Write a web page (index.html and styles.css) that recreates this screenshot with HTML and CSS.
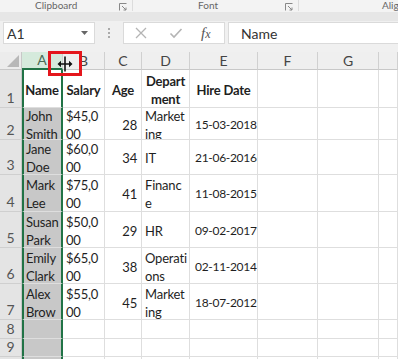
FILE: index.html
```html
<!DOCTYPE html>
<html lang="en">
<head>
    <meta charset="UTF-8">
    <title>Employees</title>
    <link rel="stylesheet" href="styles.css">
</head>
<body>
<!-- ribbon group labels -->
<div class="ribbon">
    <div class="group g1">
        <span class="label">Clipboard</span>
        <svg class="launch" width="8" height="8" viewBox="0 0 8 8"><path d="M0.5 7.5V0.5M0.5 0.5H7.5M3 3L7 7M7 4.5V7H4.5" fill="none" stroke="#888" stroke-width="1"/></svg>
    </div>
    <div class="group g2">
        <span class="label">Font</span>
        <svg class="launch" width="8" height="8" viewBox="0 0 8 8"><path d="M0.5 7.5V0.5M0.5 0.5H7.5M3 3L7 7M7 4.5V7H4.5" fill="none" stroke="#888" stroke-width="1"/></svg>
    </div>
    <div class="group g3">
        <span class="label">Alignment</span>
    </div>
</div>
<div class="band"></div>

<!-- formula bar -->
<div class="bar">
    <div class="namebox">
        <span>A1</span>
        <svg width="7" height="4" viewBox="0 0 7 4"><path d="M0 0H7L3.5 4Z" fill="#666"/></svg>
    </div>
    <div class="grip"><i></i><i></i><i></i></div>
    <div class="btns">
        <svg class="cancel" width="14" height="14" viewBox="0 0 14 14"><path d="M2 2L12 12M12 2L2 12" stroke="#b4b4b4" stroke-width="1.3"/></svg>
        <svg class="enter" width="14" height="14" viewBox="0 0 14 14"><path d="M1.5 7.5L5 11L12.5 3" fill="none" stroke="#b4b4b4" stroke-width="1.6"/></svg>
        <span class="fx">f<small>x</small></span>
    </div>
    <div class="formula">Name</div>
</div>

<!-- sheet -->
<div class="sheet">
    <div class="corner"><svg width="12" height="12" viewBox="0 0 12 12"><path d="M12 0V12H0Z" fill="#b8b8b8"/></svg></div>
    <div class="ch sel">A</div><div class="ch">B</div><div class="ch">C</div><div class="ch">D</div><div class="ch">E</div><div class="ch">F</div><div class="ch">G</div><div class="ch"></div>

    <div class="rh">1</div>
    <div class="c a act hd"><span>Name</span></div>
    <div class="c hd"><span>Salary</span></div>
    <div class="c hd"><span>Age</span></div>
    <div class="c hd"><span>Depart<br>ment</span></div>
    <div class="c hd"><span>Hire Date</span></div>
    <div class="c"></div><div class="c"></div><div class="c"></div>

    <div class="rh">2</div>
    <div class="c a"><span>John<br>Smith</span></div>
    <div class="c"><span>$45,0<br>00</span></div>
    <div class="c num"><span>28</span></div>
    <div class="c"><span>Market<br>ing</span></div>
    <div class="c date"><span>15-03-2018</span></div>
    <div class="c"></div><div class="c"></div><div class="c"></div>

    <div class="rh">3</div>
    <div class="c a"><span>Jane<br>Doe</span></div>
    <div class="c"><span>$60,0<br>00</span></div>
    <div class="c num"><span>34</span></div>
    <div class="c"><span>IT</span></div>
    <div class="c date"><span>21-06-2016</span></div>
    <div class="c"></div><div class="c"></div><div class="c"></div>

    <div class="rh">4</div>
    <div class="c a"><span>Mark<br>Lee</span></div>
    <div class="c"><span>$75,0<br>00</span></div>
    <div class="c num"><span>41</span></div>
    <div class="c"><span>Financ<br>e</span></div>
    <div class="c date"><span>11-08-2015</span></div>
    <div class="c"></div><div class="c"></div><div class="c"></div>

    <div class="rh">5</div>
    <div class="c a"><span>Susan<br>Park</span></div>
    <div class="c"><span>$50,0<br>00</span></div>
    <div class="c num"><span>29</span></div>
    <div class="c"><span>HR</span></div>
    <div class="c date"><span>09-02-2017</span></div>
    <div class="c"></div><div class="c"></div><div class="c"></div>

    <div class="rh">6</div>
    <div class="c a"><span>Emily<br>Clark</span></div>
    <div class="c"><span>$65,0<br>00</span></div>
    <div class="c num"><span>38</span></div>
    <div class="c"><span>Operati<br>ons</span></div>
    <div class="c date"><span>02-11-2014</span></div>
    <div class="c"></div><div class="c"></div><div class="c"></div>

    <div class="rh">7</div>
    <div class="c a"><span>Alex<br>Brow</span></div>
    <div class="c"><span>$55,0<br>00</span></div>
    <div class="c num"><span>45</span></div>
    <div class="c"><span>Market<br>ing</span></div>
    <div class="c date"><span>18-07-2012</span></div>
    <div class="c"></div><div class="c"></div><div class="c"></div>

    <div class="rh">8</div>
    <div class="c a"></div>
    <div class="c"></div><div class="c"></div><div class="c"></div><div class="c"></div><div class="c"></div><div class="c"></div><div class="c"></div>

    <div class="rh">9</div>
    <div class="c a"></div>
    <div class="c"></div><div class="c"></div><div class="c"></div><div class="c"></div><div class="c"></div><div class="c"></div><div class="c"></div>

    <div class="rh"></div>
    <div class="c a"></div>
    <div class="c"></div><div class="c"></div><div class="c"></div><div class="c"></div><div class="c"></div><div class="c"></div><div class="c"></div>

    <!-- highlight round the column divider, with resize cursor -->
    <div class="mark">
        <svg width="16" height="16" viewBox="0 0 16 16"><path d="M7.2 0.5H8.8V15.5H7.2Z M0.5 8L4 4.8V7.3H7.2V8.7H4V11.2Z M15.5 8L12 4.8V7.3H8.8V8.7H12V11.2Z" fill="#111"/></svg>
    </div>
</div>
</body>
</html>
```

FILE: styles.css
```css
*{
    box-sizing: border-box;
}
body{
    margin: 0;
    width: 398px;
    height: 359px;
    overflow: hidden;
    background-color: #f0f0f0;
    font-family: Lato, "Liberation Sans", sans-serif;
}
/* ribbon labels */
.ribbon{
    display: flex;
    height: 12px;
    background-color: #f3f3f3;
    font-size: 10px;
    line-height: 10px;
    color: #666;
}
.group{
    position: relative;
    display: flex;
    align-items: flex-start;
    border-right: 1px solid #dcdcdc;
    height: 11px;
}
.g1{
    width: 133px;
    padding-left: 35px;
}
.g2{
    width: 166px;
    padding-left: 65px;
}
.g3{
    flex: 1;
    padding-left: 83px;
    border-right: none;
    white-space: nowrap;
    overflow: hidden;
}
.launch{
    position: absolute;
    right: 5px;
    top: 3px;
}
.band{
    height: 9px;
    background-color: #e6e6e6;
}
/* formula bar */
.bar{
    display: flex;
    align-items: stretch;
    height: 22px;
    margin-top: 1px;
    padding-left: 3px;
}
.namebox{
    width: 92px;
    display: flex;
    align-items: center;
    justify-content: space-between;
    padding: 0 6px 0 3px;
    background-color: #fff;
    border: 1px solid #dadada;
    font-size: 14px;
    color: #333;
}
.grip{
    width: 28px;
    display: flex;
    flex-direction: column;
    align-items: center;
    justify-content: center;
    gap: 2px;
}
.grip i{
    width: 2px;
    height: 2px;
    background-color: #aaa;
}
.btns{
    width: 102px;
    display: flex;
    align-items: center;
    padding-left: 10px;
    background-color: #fff;
    border: 1px solid #dadada;
}
.enter{
    margin-left: 21px;
}
.fx{
    margin-left: 18px;
    font-family: "Liberation Serif", serif;
    font-style: italic;
    font-size: 15px;
    color: #555;
}
.fx small{
    font-size: 12px;
}
.formula{
    flex: 1;
    margin-left: 3px;
    padding-left: 12px;
    display: flex;
    align-items: center;
    background-color: #fff;
    border: 1px solid #dadada;
    border-right: none;
    font-size: 14px;
    color: #333;
}
/* grid */
.sheet{
    position: relative;
    display: grid;
    grid-template-columns: 22px 41px 42px 37px 48px 68px 60px 61px 1fr;
    grid-template-rows: 18px 38px 32px 35px 37px 36px 36px 36px 19px 18px 20px;
    margin-top: 8px;
    background-color: #fff;
    font-size: 13px;
    line-height: 18px;
    color: #1f1f1f;
}
.corner{
    display: flex;
    align-items: flex-end;
    justify-content: flex-end;
    padding: 0 2px 2px 0;
    background-color: #ececec;
    border-right: 1px solid #c8c8c8;
    border-bottom: 1px solid #c8c8c8;
}
.ch{
    display: flex;
    align-items: center;
    justify-content: center;
    background-color: #efefef;
    border-right: 1px solid #d0d0d0;
    border-bottom: 1px solid #c8c8c8;
    font-size: 14px;
    color: #444;
}
.ch.sel{
    background-color: #d5eadc;
    color: #4a6b55;
    border-bottom: 2px solid #217346;
}
.rh{
    display: flex;
    align-items: flex-end;
    justify-content: center;
    background-color: #e4e4e4;
    border-right: 1px solid #c8c8c8;
    border-bottom: 1px solid #cfcfcf;
    font-size: 14px;
    color: #555;
}
.c{
    display: flex;
    align-items: center;
    padding: 2px 3px 0;
    border-right: 1px solid #dedede;
    border-bottom: 1px solid #dedede;
    overflow: hidden;
    white-space: nowrap;
    letter-spacing: -0.2px;
}
.c.a{
    background-color: #c8c8c8;
    border-left: 2px solid #217346;
    border-right: 2px solid #217346;
    padding-left: 2px;
}
.c.act{
    background-color: #fff;
}
.c.hd{
    justify-content: center;
    font-weight: bold;
    text-align: center;
}
.c.num{
    justify-content: flex-end;
    padding-right: 4px;
}
.c.date{
    padding-left: 5px;
    font-size: 12px;
    letter-spacing: -0.3px;
}
.mark{
    position: absolute;
    left: 48px;
    top: -1px;
    width: 34px;
    height: 25px;
    border: 3px solid #e4161c;
    display: flex;
    align-items: center;
    justify-content: center;
}
```
